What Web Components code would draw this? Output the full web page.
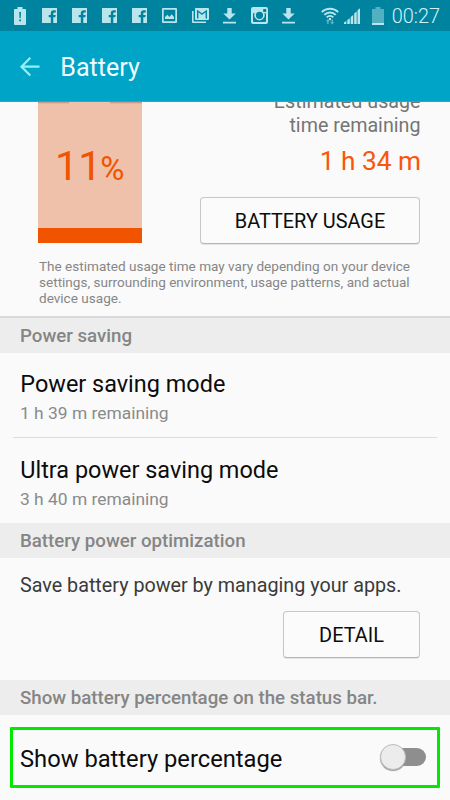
<!DOCTYPE html>
<html lang="en">
<head>
<meta charset="utf-8">
<title>Battery</title>
<style>
html,body{margin:0;height:100%;background:#fafafa}
body{font-family:Roboto,"Liberation Sans",sans-serif;color:#0c0c0c;width:450px;height:800px;overflow:hidden}
</style>
</head>
<body>
<battery-screen></battery-screen>
<script>
const define = (name, css, html) => customElements.define(name, class extends HTMLElement {
  connectedCallback() {
    if (this.shadowRoot) return;
    this.attachShadow({ mode: 'open' }).innerHTML = `<style>${css}</style>${typeof html === 'function' ? html(this) : html}`;
  }
});

const ICONS = {
  alert: [12, 18, '<path fill-rule="evenodd" d="M3.5 0h5v2H11q1 0 1 1v14q0 1-1 1H1q-1 0-1-1V3q0-1 1-1h2.500zM5.200 5l.3 6.200h1.200L7 5zM5.200 12.500v1.800H7v-1.800z"/>'],
  facebook: [15, 15, '<path fill-rule="evenodd" d="M0 0h15v15h-3.700V9.300h2l.4-2.400h-2.400V5.500q0-1.100 1.200-1.100h1.300V2.200h-1.900Q8.800 2.200 8.800 5v1.900H6.700v2.400h2.100V15H0z"/>'],
  image: [15, 15, '<path fill-rule="evenodd" d="M1 0h13q1 0 1 1v13q0 1-1 1H1q-1 0-1-1V1q0-1 1-1zM1.700 1.700v11.600h11.600V1.700zM3 11V9l2.400-2.300 2 2.200 2.300-2.700L12 9v2z"/>'],
  gmail: [17, 15, '<path d="M0 3h1.600v10.400H14V15H1q-1 0-1-1z"/><path fill-rule="evenodd" d="M4 0h12q1 0 1 1v10q0 1-1 1H4q-1 0-1-1V1q0-1 1-1zM5 1.700v8.800h1.400V4.300L10 7l3.600-2.700v6.200H15V1.700L10 5.200z"/>'],
  download: [13, 16, '<path d="M4.300 0h4.400v5.500h4L6.500 11.500.3 5.500h4zM0 13.700h13v1.900H0z"/>'],
  instagram: [17, 17, '<path fill-rule="evenodd" d="M2 0h13q2 0 2 2v13q0 2-2 2H2q-2 0-2-2V2q0-2 2-2zM12.200 2v3h3V2zM2 6.200V14q0 1 1 1h11q1 0 1-1V6.200h-1.700a5.200 5.200 0 1 1-9.600 0zM8.500 4.700a3.600 3.600 0 1 0 0 7.200 3.600 3.600 0 0 0 0-7.200z"/>'],
  wifi: [18, 18, '<g fill="none" stroke="currentColor" stroke-width="1.900"><path d="M.8 5.200a11.500 11.500 0 0 1 16.400 0M3.300 7.900a8 8 0 0 1 11.400 0M5.700 10.300a4.600 4.600 0 0 1 6.600 0"/></g><circle cx="9" cy="12" r="1.200"/><path opacity=".55" d="M6.900 12l2 2.200H7.600V17H6.200v-2.800H4.900zM11.200 17.500l-2-2.200h1.300v-2.800h1.400v2.800h1.300z"/>'],
  signal: [16, 16, '<path d="M0 14.500L2.300 13v3H0zM3.300 12l2.500-1.700V16H3.300zM6.700 9l2.500-2V16H6.700zM10.200 5.500l2.500-2V16h-2.500zM13.500 2.200l2.500-2V16h-2.500z"/>'],
  battery: [12, 18, '<path opacity=".45" d="M3.500 0h5v2H12v14H0V2h3.500z"/><path d="M0 16h12v2H0z"/>'],
  back: [20, 20, '<path fill="none" stroke="currentColor" stroke-width="2.200" d="M10.300 .8L1.500 9.700l8.800 8.900M1.600 9.700H19.500"/>']
};

define('ui-icon', ':host{display:block;flex:none}svg{display:block;overflow:visible}', el => {
  const [w, h, body] = ICONS[el.getAttribute('name')];
  return `<svg width="${w}" height="${h}" viewBox="0 0 ${w} ${h}" fill="currentColor">${body}</svg>`;
});

define('status-bar', `
:host{display:flex;align-items:center;justify-content:space-between;height:31px;box-sizing:border-box;padding:0 10px 0 14px;background:#00839f;color:#b9e6ec}
.g{display:flex;align-items:center}
.n ui-icon{margin-right:15px}
.n ui-icon[name=alert]{margin-right:16px}
.n ui-icon[name=gmail]{margin-right:14px}
.n ui-icon[name=instagram]{margin-right:14px}
.s ui-icon[name=wifi]{margin:1px 5px 0 0}
.s ui-icon[name=signal]{margin-right:12px}
.s ui-icon[name=battery]{margin-right:8px}
span{font-size:19.900px;font-weight:300;line-height:24px;margin-top:3px;color:#d2f2f6}`,
`<div class="g n"><ui-icon name="alert"></ui-icon>${'<ui-icon name="facebook"></ui-icon>'.repeat(4)}<ui-icon name="image"></ui-icon><ui-icon name="gmail"></ui-icon><ui-icon name="download"></ui-icon><ui-icon name="instagram"></ui-icon><ui-icon name="download"></ui-icon></div>
<div class="g s"><ui-icon name="wifi"></ui-icon><ui-icon name="signal"></ui-icon><ui-icon name="battery"></ui-icon><span>00:27</span></div>`);

define('app-bar', `
:host{display:flex;align-items:center;height:71px;box-sizing:border-box;padding-left:20px;background:#00a4c7;border-bottom:1px solid #2fa6c2}
ui-icon{color:#8ff3f6;margin-right:20.300px;margin-top:1px}
h1{margin:4px 0 0;font-size:25.100px;font-weight:400;line-height:30px;color:#f2fcff}`,
`<ui-icon name="back"></ui-icon><h1><slot></slot></h1>`);

define('outline-button', `
:host{display:flex;align-items:center;justify-content:center;box-sizing:border-box;height:47px;border:1.500px solid #c6c6c6;border-bottom-color:#b5b5b5;border-radius:4px;box-shadow:0 1px 0 #e4e4e4;font-size:19.900px;line-height:24px;background:#fbfbfb;color:#0c0c0c}
span{padding-top:3px}`,
`<span><slot></slot></span>`);

define('battery-gauge', `
:host{display:flex;flex-direction:column;box-sizing:border-box;width:104px;height:141px;background:#efc0aa;color:#f05400;border-bottom:15px solid #f05400}
.cap{display:flex;justify-content:space-between;height:2px}
.cap i{width:31px;background:linear-gradient(#c99d8b 50%,#e3b5a0 50%)}
.cap i+i{width:32px}
.v{display:flex;align-items:baseline;padding:37px 0 0 17px;line-height:50px}
b{font-weight:400;font-size:41.500px}
small{font-size:33px;margin-left:-1.500px}`,
`<div class="cap"><i></i><i></i></div><div class="v"><b>11</b><small>%</small></div>`);

define('battery-summary', `
:host{display:block;height:216px;box-sizing:border-box;border-bottom:2px solid #d9d9d9}
.top{display:flex;justify-content:space-between;height:156px;padding:0 30px 0 38px}
.r{display:flex;flex-direction:column;align-items:flex-end;margin-top:-12px}
.e{font-size:19.700px;line-height:24px;margin-right:-.5px;color:#757575;text-align:right}
.t{font-size:26.250px;line-height:30px;margin:8px -1px 21px 0;color:#f9560b}
outline-button{width:220px}
p{margin:0 0 0 39px;font-size:13.570px;line-height:16px;color:#868686;white-space:nowrap}`,
`<div class="top"><battery-gauge></battery-gauge><div class="r"><div class="e">Estimated usage<br>time remaining</div><div class="t">1 h 34 m</div><outline-button>BATTERY USAGE</outline-button></div></div>
<p>The estimated usage time may vary depending on your device<br>settings, surrounding environment, usage patterns, and actual<br>device usage.</p>`);

define('section-header', `
:host{display:flex;align-items:center;height:35px;box-sizing:border-box;padding:1px 0 0 20px;background:#ededed;color:#858585;font-size:18.680px;font-weight:500;line-height:22px;white-space:nowrap}`,
`<slot></slot>`);

define('setting-row', `
:host{display:block;box-sizing:border-box;height:85px;padding:18px 0 0 20px}
:host([divided]){padding-top:17px;background:linear-gradient(#dcdcdc,#dcdcdc) 13px 100%/424px 1px no-repeat}
.a{font-size:23.450px;line-height:28px;padding-left:.3px}
.b{font-size:17.420px;line-height:20px;margin-top:5px;color:#8a8a8a}`,
`<div class="a"><slot></slot></div><div class="b"><slot name="sub"></slot></div>`);

define('optimize-panel', `
:host{display:flex;flex-direction:column;height:122px;box-sizing:border-box;padding:16px 30px 0 20px}
p{margin:0 0 13px;font-size:19.740px;line-height:24px;color:#3a3a3a;white-space:nowrap}
outline-button{width:137px;align-self:flex-end}`,
`<p>Save battery power by managing your apps.</p><outline-button>DETAIL</outline-button>`);

define('toggle-switch', `
:host{display:flex;align-items:center;width:47px;height:27px}
.track{width:36px;height:18px;border-radius:9px;margin-left:11px;background:#8e8e8e;display:flex;align-items:center}
.thumb{flex:none;width:26px;height:26px;box-sizing:border-box;border-radius:50%;margin-left:-10px;background:#ececec;border:1px solid #bdbdbd;box-shadow:0 1px 1px #999}`,
`<div class="track"><div class="thumb"></div></div>`);

define('highlighted-toggle', `
:host{display:flex;align-items:center;justify-content:space-between;box-sizing:border-box;height:61px;margin:12px 10px 0;border:3px solid #00ea00;border-radius:1px;padding:0 11px 1px 7px}
span{font-size:23.720px;line-height:28px;padding-top:3px}`,
`<span><slot></slot></span><toggle-switch></toggle-switch>`);

define('battery-screen', `:host{display:flex;flex-direction:column;width:450px;height:800px;background:#fafafa}
main{flex:1;overflow:hidden}`,
`<status-bar></status-bar><app-bar>Battery</app-bar>
<main>
<battery-summary></battery-summary>
<section-header>Power saving</section-header>
<setting-row divided>Power saving mode<span slot="sub">1 h 39 m remaining</span></setting-row>
<setting-row>Ultra power saving mode<span slot="sub">3 h 40 m remaining</span></setting-row>
<section-header>Battery power optimization</section-header>
<optimize-panel></optimize-panel>
<section-header>Show battery percentage on the status bar.</section-header>
<highlighted-toggle>Show battery percentage</highlighted-toggle>
</main>`);
</script>
</body>
</html>
